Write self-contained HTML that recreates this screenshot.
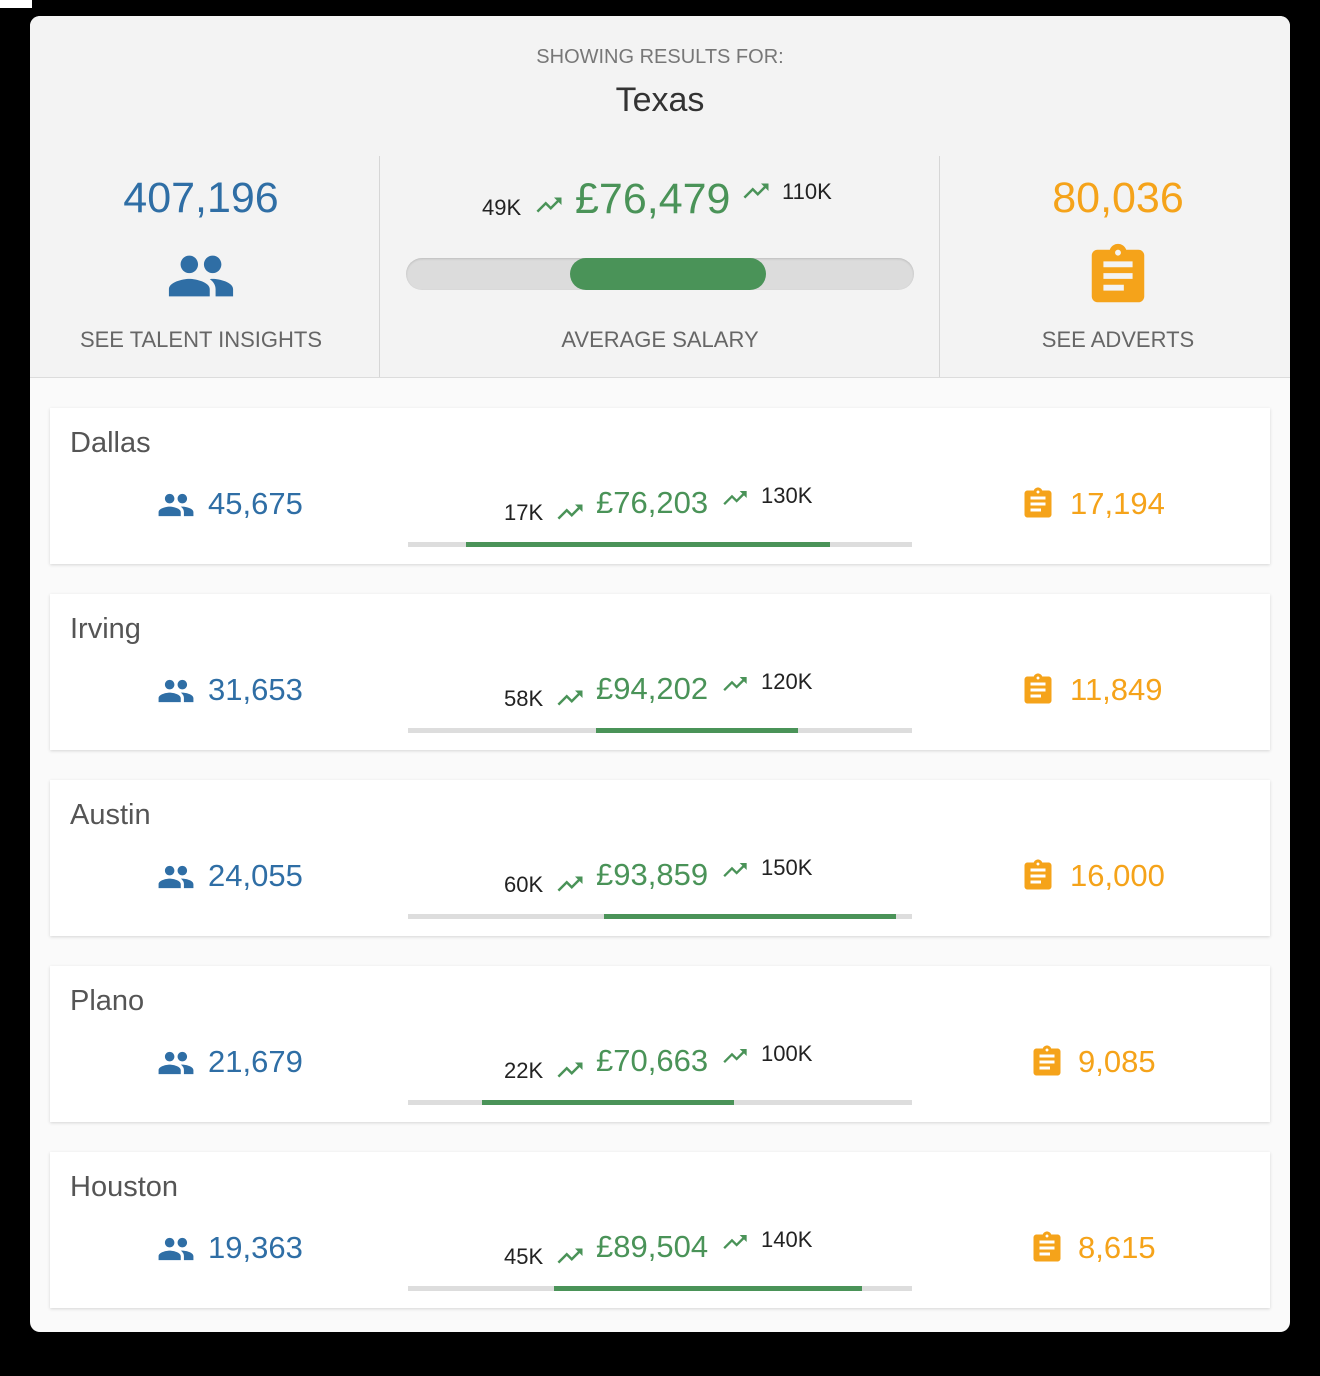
<!DOCTYPE html>
<html><head><meta charset="utf-8"><style>
*{margin:0;padding:0;box-sizing:border-box}
body{width:1320px;height:1376px;background:#000;position:relative;overflow:hidden;font-family:"Liberation Sans",sans-serif}
.a{position:absolute;white-space:nowrap;line-height:1}
#card{position:absolute;left:30px;top:16px;width:1260px;height:1316px;background:#fafafa;border-radius:10px;overflow:hidden}
#head{position:absolute;left:0;top:0;width:1260px;height:362px;background:#f3f3f3;border-bottom:1px solid #dcdcdc}
.row{position:absolute;left:50px;width:1220px;height:156px;background:#fff;box-shadow:0 1px 3px rgba(0,0,0,.15)}
.blue{color:#2f6ea5}.green{color:#4a9358}.org{color:#f5a31a}
.city{font-size:29px;color:#555;left:70px}
svg{position:absolute}
</style></head><body>
<div class="a" style="left:0;top:0;width:32px;height:8px;background:#fff"></div>
<div id="card"><div id="head"></div></div>

<div class="a" style="left:0;width:1320px;text-align:center;top:47px;font-size:20px;color:#777">SHOWING RESULTS FOR:</div>
<div class="a" style="left:0;width:1320px;text-align:center;top:83px;font-size:34px;color:#333">Texas</div>
<div class="a" style="left:379px;top:156px;width:1px;height:221px;background:#d6d6d6"></div>
<div class="a" style="left:939px;top:156px;width:1px;height:221px;background:#d6d6d6"></div>

<div class="a blue" style="left:60px;width:282px;text-align:center;top:177px;font-size:43px">407,196</div>
<svg style="left:166px;top:241px" width="70" height="70" viewBox="0 0 24 24"><path fill="#2f6ea5" d="M16 11c1.66 0 2.99-1.34 2.99-3S17.66 5 16 5c-1.66 0-3 1.34-3 3s1.34 3 3 3zm-8 0c1.66 0 2.99-1.34 2.99-3S9.66 5 8 5C6.34 5 5 6.34 5 8s1.34 3 3 3zm0 2c-2.33 0-7 1.17-7 3.5V19h14v-2.5c0-2.33-4.67-3.5-7-3.5zm8 0c-.29 0-.62.02-.97.05 1.16.84 1.97 1.97 1.97 3.45V19h6v-2.5c0-2.33-4.67-3.5-7-3.5z"/></svg>
<div class="a" style="left:40px;width:322px;text-align:center;top:329px;font-size:22px;color:#666">SEE TALENT INSIGHTS</div>

<div class="a" style="left:482px;top:197px;font-size:22px;color:#222">49K</div>
<svg style="left:534px;top:190px" width="30" height="30" viewBox="0 0 24 24"><path fill="#4a9358" d="M16 6l2.29 2.29-4.88 4.88-4-4L2 16.59 3.41 18l6-6 4 4 6.3-6.29L22 12V6z"/></svg>
<div class="a green" style="left:575px;top:178px;font-size:43px">£76,479</div>
<svg style="left:741px;top:176px" width="30" height="30" viewBox="0 0 24 24"><path fill="#4a9358" d="M16 6l2.29 2.29-4.88 4.88-4-4L2 16.59 3.41 18l6-6 4 4 6.3-6.29L22 12V6z"/></svg>
<div class="a" style="left:782px;top:181px;font-size:22px;color:#222">110K</div>
<div class="a" style="left:406px;top:258px;width:508px;height:32px;border-radius:16px;background:#dcdcdc;box-shadow:inset 0 1px 2px rgba(0,0,0,.15)"></div>
<div class="a" style="left:570px;top:258px;width:196px;height:32px;border-radius:16px;background:#4a9358"></div>
<div class="a" style="left:400px;width:520px;text-align:center;top:329px;font-size:22px;color:#666">AVERAGE SALARY</div>

<div class="a org" style="left:960px;width:316px;text-align:center;top:177px;font-size:43px">80,036</div>
<svg style="left:1083px;top:241px" width="70" height="70" viewBox="0 0 24 24"><path fill="#f5a31a" d="M19 3h-4.18C14.4 1.84 13.3 1 12 1c-1.3 0-2.4.84-2.82 2H5c-1.1 0-2 .9-2 2v14c0 1.1.9 2 2 2h14c1.1 0 2-.9 2-2V5c0-1.1-.9-2-2-2zm-7 0c.55 0 1 .45 1 1s-.45 1-1 1-1-.45-1-1 .45-1 1-1zm2 14H7v-2h7v2zm3-4H7v-2h10v2zm0-4H7V7h10v2z"/></svg>
<div class="a" style="left:960px;width:316px;text-align:center;top:329px;font-size:22px;color:#666">SEE ADVERTS</div>

<div class="row" style="top:408px"></div>
<div class="row" style="top:594px"></div>
<div class="row" style="top:780px"></div>
<div class="row" style="top:966px"></div>
<div class="row" style="top:1152px"></div>

<!-- Dallas -->
<div class="a city" style="top:429px">Dallas</div>
<svg style="left:157px;top:486px" width="38" height="38" viewBox="0 0 24 24"><path fill="#2f6ea5" d="M16 11c1.66 0 2.99-1.34 2.99-3S17.66 5 16 5c-1.66 0-3 1.34-3 3s1.34 3 3 3zm-8 0c1.66 0 2.99-1.34 2.99-3S9.66 5 8 5C6.34 5 5 6.34 5 8s1.34 3 3 3zm0 2c-2.33 0-7 1.17-7 3.5V19h14v-2.5c0-2.33-4.67-3.5-7-3.5zm8 0c-.29 0-.62.02-.97.05 1.16.84 1.97 1.97 1.97 3.45V19h6v-2.5c0-2.33-4.67-3.5-7-3.5z"/></svg>
<div class="a blue" style="left:208px;top:488px;font-size:31px">45,675</div>
<div class="a" style="left:504px;top:502px;font-size:22px;color:#222">17K</div>
<svg style="left:555px;top:497px" width="30" height="30" viewBox="0 0 24 24"><path fill="#4a9358" d="M16 6l2.29 2.29-4.88 4.88-4-4L2 16.59 3.41 18l6-6 4 4 6.3-6.29L22 12V6z"/></svg>
<div class="a green" style="left:596px;top:487px;font-size:31px">£76,203</div>
<svg style="left:721px;top:484px" width="28" height="28" viewBox="0 0 24 24"><path fill="#4a9358" d="M16 6l2.29 2.29-4.88 4.88-4-4L2 16.59 3.41 18l6-6 4 4 6.3-6.29L22 12V6z"/></svg>
<div class="a" style="left:761px;top:485px;font-size:22px;color:#222">130K</div>
<div class="a" style="left:408px;top:542px;width:504px;height:5px;background:#ddd"></div>
<div class="a" style="left:466px;top:542px;width:364px;height:5px;background:#4a9358"></div>
<svg style="left:1020px;top:486px" width="36" height="36" viewBox="0 0 24 24"><path fill="#f5a31a" d="M19 3h-4.18C14.4 1.84 13.3 1 12 1c-1.3 0-2.4.84-2.82 2H5c-1.1 0-2 .9-2 2v14c0 1.1.9 2 2 2h14c1.1 0 2-.9 2-2V5c0-1.1-.9-2-2-2zm-7 0c.55 0 1 .45 1 1s-.45 1-1 1-1-.45-1-1 .45-1 1-1zm2 14H7v-2h7v2zm3-4H7v-2h10v2zm0-4H7V7h10v2z"/></svg>
<div class="a org" style="left:1070px;top:488px;font-size:31px">17,194</div>

<!-- Irving -->
<div class="a city" style="top:615px">Irving</div>
<svg style="left:157px;top:672px" width="38" height="38" viewBox="0 0 24 24"><path fill="#2f6ea5" d="M16 11c1.66 0 2.99-1.34 2.99-3S17.66 5 16 5c-1.66 0-3 1.34-3 3s1.34 3 3 3zm-8 0c1.66 0 2.99-1.34 2.99-3S9.66 5 8 5C6.34 5 5 6.34 5 8s1.34 3 3 3zm0 2c-2.33 0-7 1.17-7 3.5V19h14v-2.5c0-2.33-4.67-3.5-7-3.5zm8 0c-.29 0-.62.02-.97.05 1.16.84 1.97 1.97 1.97 3.45V19h6v-2.5c0-2.33-4.67-3.5-7-3.5z"/></svg>
<div class="a blue" style="left:208px;top:674px;font-size:31px">31,653</div>
<div class="a" style="left:504px;top:688px;font-size:22px;color:#222">58K</div>
<svg style="left:555px;top:683px" width="30" height="30" viewBox="0 0 24 24"><path fill="#4a9358" d="M16 6l2.29 2.29-4.88 4.88-4-4L2 16.59 3.41 18l6-6 4 4 6.3-6.29L22 12V6z"/></svg>
<div class="a green" style="left:596px;top:673px;font-size:31px">£94,202</div>
<svg style="left:721px;top:670px" width="28" height="28" viewBox="0 0 24 24"><path fill="#4a9358" d="M16 6l2.29 2.29-4.88 4.88-4-4L2 16.59 3.41 18l6-6 4 4 6.3-6.29L22 12V6z"/></svg>
<div class="a" style="left:761px;top:671px;font-size:22px;color:#222">120K</div>
<div class="a" style="left:408px;top:728px;width:504px;height:5px;background:#ddd"></div>
<div class="a" style="left:596px;top:728px;width:202px;height:5px;background:#4a9358"></div>
<svg style="left:1020px;top:672px" width="36" height="36" viewBox="0 0 24 24"><path fill="#f5a31a" d="M19 3h-4.18C14.4 1.84 13.3 1 12 1c-1.3 0-2.4.84-2.82 2H5c-1.1 0-2 .9-2 2v14c0 1.1.9 2 2 2h14c1.1 0 2-.9 2-2V5c0-1.1-.9-2-2-2zm-7 0c.55 0 1 .45 1 1s-.45 1-1 1-1-.45-1-1 .45-1 1-1zm2 14H7v-2h7v2zm3-4H7v-2h10v2zm0-4H7V7h10v2z"/></svg>
<div class="a org" style="left:1070px;top:674px;font-size:31px">11,849</div>

<!-- Austin -->
<div class="a city" style="top:801px">Austin</div>
<svg style="left:157px;top:858px" width="38" height="38" viewBox="0 0 24 24"><path fill="#2f6ea5" d="M16 11c1.66 0 2.99-1.34 2.99-3S17.66 5 16 5c-1.66 0-3 1.34-3 3s1.34 3 3 3zm-8 0c1.66 0 2.99-1.34 2.99-3S9.66 5 8 5C6.34 5 5 6.34 5 8s1.34 3 3 3zm0 2c-2.33 0-7 1.17-7 3.5V19h14v-2.5c0-2.33-4.67-3.5-7-3.5zm8 0c-.29 0-.62.02-.97.05 1.16.84 1.97 1.97 1.97 3.45V19h6v-2.5c0-2.33-4.67-3.5-7-3.5z"/></svg>
<div class="a blue" style="left:208px;top:860px;font-size:31px">24,055</div>
<div class="a" style="left:504px;top:874px;font-size:22px;color:#222">60K</div>
<svg style="left:555px;top:869px" width="30" height="30" viewBox="0 0 24 24"><path fill="#4a9358" d="M16 6l2.29 2.29-4.88 4.88-4-4L2 16.59 3.41 18l6-6 4 4 6.3-6.29L22 12V6z"/></svg>
<div class="a green" style="left:596px;top:859px;font-size:31px">£93,859</div>
<svg style="left:721px;top:856px" width="28" height="28" viewBox="0 0 24 24"><path fill="#4a9358" d="M16 6l2.29 2.29-4.88 4.88-4-4L2 16.59 3.41 18l6-6 4 4 6.3-6.29L22 12V6z"/></svg>
<div class="a" style="left:761px;top:857px;font-size:22px;color:#222">150K</div>
<div class="a" style="left:408px;top:914px;width:504px;height:5px;background:#ddd"></div>
<div class="a" style="left:604px;top:914px;width:292px;height:5px;background:#4a9358"></div>
<svg style="left:1020px;top:858px" width="36" height="36" viewBox="0 0 24 24"><path fill="#f5a31a" d="M19 3h-4.18C14.4 1.84 13.3 1 12 1c-1.3 0-2.4.84-2.82 2H5c-1.1 0-2 .9-2 2v14c0 1.1.9 2 2 2h14c1.1 0 2-.9 2-2V5c0-1.1-.9-2-2-2zm-7 0c.55 0 1 .45 1 1s-.45 1-1 1-1-.45-1-1 .45-1 1-1zm2 14H7v-2h7v2zm3-4H7v-2h10v2zm0-4H7V7h10v2z"/></svg>
<div class="a org" style="left:1070px;top:860px;font-size:31px">16,000</div>

<!-- Plano -->
<div class="a city" style="top:987px">Plano</div>
<svg style="left:157px;top:1044px" width="38" height="38" viewBox="0 0 24 24"><path fill="#2f6ea5" d="M16 11c1.66 0 2.99-1.34 2.99-3S17.66 5 16 5c-1.66 0-3 1.34-3 3s1.34 3 3 3zm-8 0c1.66 0 2.99-1.34 2.99-3S9.66 5 8 5C6.34 5 5 6.34 5 8s1.34 3 3 3zm0 2c-2.33 0-7 1.17-7 3.5V19h14v-2.5c0-2.33-4.67-3.5-7-3.5zm8 0c-.29 0-.62.02-.97.05 1.16.84 1.97 1.97 1.97 3.45V19h6v-2.5c0-2.33-4.67-3.5-7-3.5z"/></svg>
<div class="a blue" style="left:208px;top:1046px;font-size:31px">21,679</div>
<div class="a" style="left:504px;top:1060px;font-size:22px;color:#222">22K</div>
<svg style="left:555px;top:1055px" width="30" height="30" viewBox="0 0 24 24"><path fill="#4a9358" d="M16 6l2.29 2.29-4.88 4.88-4-4L2 16.59 3.41 18l6-6 4 4 6.3-6.29L22 12V6z"/></svg>
<div class="a green" style="left:596px;top:1045px;font-size:31px">£70,663</div>
<svg style="left:721px;top:1042px" width="28" height="28" viewBox="0 0 24 24"><path fill="#4a9358" d="M16 6l2.29 2.29-4.88 4.88-4-4L2 16.59 3.41 18l6-6 4 4 6.3-6.29L22 12V6z"/></svg>
<div class="a" style="left:761px;top:1043px;font-size:22px;color:#222">100K</div>
<div class="a" style="left:408px;top:1100px;width:504px;height:5px;background:#ddd"></div>
<div class="a" style="left:482px;top:1100px;width:252px;height:5px;background:#4a9358"></div>
<svg style="left:1029px;top:1044px" width="36" height="36" viewBox="0 0 24 24"><path fill="#f5a31a" d="M19 3h-4.18C14.4 1.84 13.3 1 12 1c-1.3 0-2.4.84-2.82 2H5c-1.1 0-2 .9-2 2v14c0 1.1.9 2 2 2h14c1.1 0 2-.9 2-2V5c0-1.1-.9-2-2-2zm-7 0c.55 0 1 .45 1 1s-.45 1-1 1-1-.45-1-1 .45-1 1-1zm2 14H7v-2h7v2zm3-4H7v-2h10v2zm0-4H7V7h10v2z"/></svg>
<div class="a org" style="left:1078px;top:1046px;font-size:31px">9,085</div>

<!-- Houston -->
<div class="a city" style="top:1173px">Houston</div>
<svg style="left:157px;top:1230px" width="38" height="38" viewBox="0 0 24 24"><path fill="#2f6ea5" d="M16 11c1.66 0 2.99-1.34 2.99-3S17.66 5 16 5c-1.66 0-3 1.34-3 3s1.34 3 3 3zm-8 0c1.66 0 2.99-1.34 2.99-3S9.66 5 8 5C6.34 5 5 6.34 5 8s1.34 3 3 3zm0 2c-2.33 0-7 1.17-7 3.5V19h14v-2.5c0-2.33-4.67-3.5-7-3.5zm8 0c-.29 0-.62.02-.97.05 1.16.84 1.97 1.97 1.97 3.45V19h6v-2.5c0-2.33-4.67-3.5-7-3.5z"/></svg>
<div class="a blue" style="left:208px;top:1232px;font-size:31px">19,363</div>
<div class="a" style="left:504px;top:1246px;font-size:22px;color:#222">45K</div>
<svg style="left:555px;top:1241px" width="30" height="30" viewBox="0 0 24 24"><path fill="#4a9358" d="M16 6l2.29 2.29-4.88 4.88-4-4L2 16.59 3.41 18l6-6 4 4 6.3-6.29L22 12V6z"/></svg>
<div class="a green" style="left:596px;top:1231px;font-size:31px">£89,504</div>
<svg style="left:721px;top:1228px" width="28" height="28" viewBox="0 0 24 24"><path fill="#4a9358" d="M16 6l2.29 2.29-4.88 4.88-4-4L2 16.59 3.41 18l6-6 4 4 6.3-6.29L22 12V6z"/></svg>
<div class="a" style="left:761px;top:1229px;font-size:22px;color:#222">140K</div>
<div class="a" style="left:408px;top:1286px;width:504px;height:5px;background:#ddd"></div>
<div class="a" style="left:554px;top:1286px;width:308px;height:5px;background:#4a9358"></div>
<svg style="left:1029px;top:1230px" width="36" height="36" viewBox="0 0 24 24"><path fill="#f5a31a" d="M19 3h-4.18C14.4 1.84 13.3 1 12 1c-1.3 0-2.4.84-2.82 2H5c-1.1 0-2 .9-2 2v14c0 1.1.9 2 2 2h14c1.1 0 2-.9 2-2V5c0-1.1-.9-2-2-2zm-7 0c.55 0 1 .45 1 1s-.45 1-1 1-1-.45-1-1 .45-1 1-1zm2 14H7v-2h7v2zm3-4H7v-2h10v2zm0-4H7V7h10v2z"/></svg>
<div class="a org" style="left:1078px;top:1232px;font-size:31px">8,615</div>
</body></html>
